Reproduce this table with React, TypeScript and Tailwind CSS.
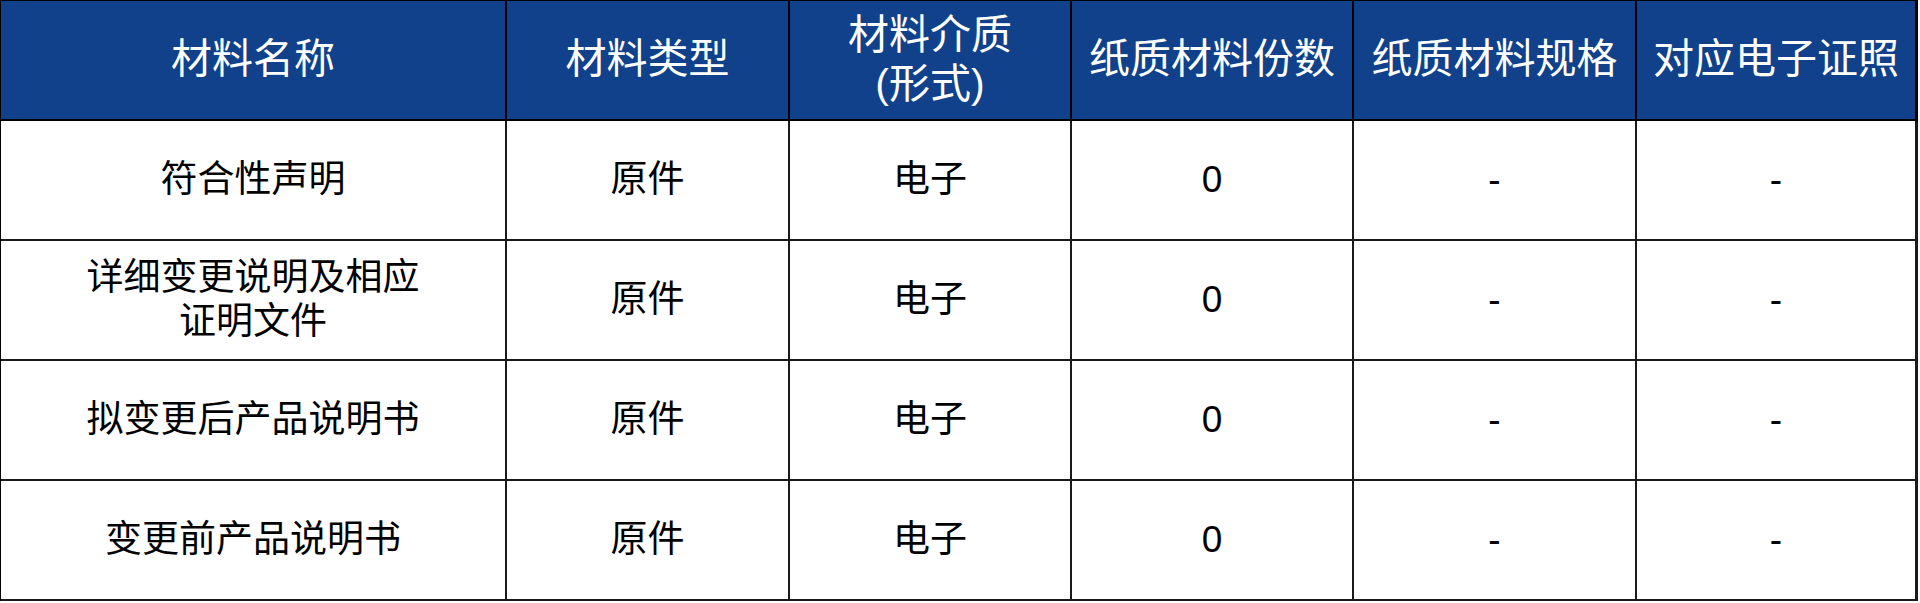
const headers = ["材料名称", "材料类型", "材料介质\n(形式)", "纸质材料份数", "纸质材料规格", "对应电子证照"];

const rows = [
  { name: "符合性声明", type: "原件", medium: "电子", count: "0", spec: "-", cert: "-" },
  { name: "详细变更说明及相应\n证明文件", type: "原件", medium: "电子", count: "0", spec: "-", cert: "-" },
  { name: "拟变更后产品说明书", type: "原件", medium: "电子", count: "0", spec: "-", cert: "-" },
  { name: "变更前产品说明书", type: "原件", medium: "电子", count: "0", spec: "-", cert: "-" },
];

const fontStack = { fontFamily: '"Liberation Sans", "Noto Sans CJK SC", sans-serif' };

export default function App(): JSX.Element {
  return (
    <div className="h-[603px] w-[1920px] overflow-hidden bg-white" style={fontStack}>
      <div className="grid w-[1918px] grid-cols-[506px_283px_282px_282px_283px_281px] border-l border-t border-black">
        {headers.map((label, i) => (
          <div
            key={label}
            className={`flex h-[120px] items-center justify-center whitespace-pre-line border-b-2 border-black bg-[#10418a] text-center text-[41px] leading-[1.2] text-white ${
              i === headers.length - 1 ? "border-r-[3px]" : "border-r-2"
            }`}
          >
            {label}
          </div>
        ))}
        {rows.map((row) =>
          [row.name, row.type, row.medium, row.count, row.spec, row.cert].map((value, i) => (
            <div
              key={`${row.name}-${i}`}
              className={`flex h-[120px] items-center justify-center whitespace-pre-line border-b-2 border-[#1a1a1a] text-center text-[37px] leading-[1.2] text-black ${
                i === 5 ? "border-r-[3px]" : "border-r-2"
              }`}
            >
              {value}
            </div>
          )),
        )}
      </div>
    </div>
  );
}
